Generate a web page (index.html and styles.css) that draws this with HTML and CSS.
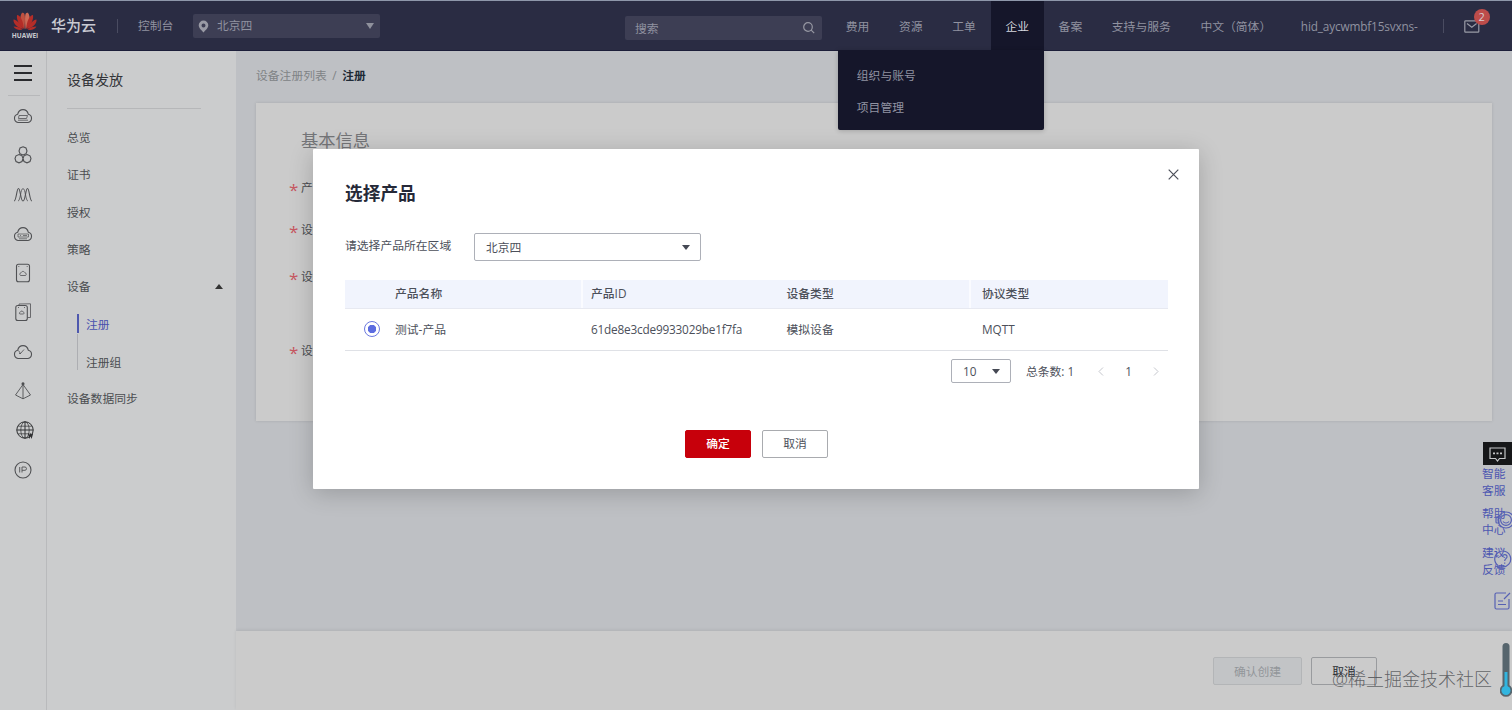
FILE: index.html
```html
<!DOCTYPE html>
<html lang="zh-CN">
<head>
<meta charset="utf-8">
<title>设备发放</title>
<link rel="stylesheet" href="styles.css">
</head>
<body>
<div class="app">
  <header class="topbar">
    <div class="logo">
      <svg width="26" height="18" viewBox="0 0 26 18">
        <g fill="#b42d28">
          <path d="M12.5 17C8 13 7 5 10 .8 13 0 13.500 3 12.500 17Z" fill="#c0503f"/>
          <path d="M13.500 17C18 13 19 5 16 .8 13 0 12.500 3 13.500 17Z" fill="#cf6a55"/>
          <path d="M11.800 17C8 14 4 8 5 3 8 3 11.500 9 11.800 17Z"/>
          <path d="M14.200 17C18 14 22 8 21 3 18 3 14.500 9 14.200 17Z"/>
          <path d="M11 17C6 16 1 12 1.500 7.500 5 8 9 12 11 17Z"/>
          <path d="M15 17C20 16 25 12 24.500 7.500 21 8 17 12 15 17Z"/>
          <path d="M10.500 17.600C7 18.500 3 17.500 1.500 14.500 5 14.500 8 15.500 10.500 17.600Z"/>
          <path d="M15.500 17.600C19 18.500 23 17.500 24.500 14.500 21 14.500 18 15.500 15.500 17.600Z"/>
        </g>
      </svg>
      <span class="logo-word">HUAWEI</span>
    </div>
    <span class="brand">华为云</span>
    <i class="bar-divider"></i>
    <span class="console">控制台</span>
    <div class="region">
      <svg width="11" height="13" viewBox="0 0 11 13"><path fill="#999aa5" fill-rule="evenodd" d="M5.500 .5a4.800 4.800 0 0 0-4.800 4.800c0 3 3 5 4.800 7.300 1.800-2.300 4.800-4.300 4.800-7.300A4.800 4.800 0 0 0 5.500 .5Zm0 2.900a2 2 0 1 1 0 4 2 2 0 0 1 0-4Z"/></svg>
      <span>北京四</span>
      <svg class="push" width="8" height="6" viewBox="0 0 8 6"><path d="M0 0h8L4 6Z" fill="#8f919c"/></svg>
    </div>
    <div class="search">
      <span>搜索</span>
      <svg class="push" width="12" height="12" viewBox="0 0 12 12" fill="none" stroke="#9697a2" stroke-width="1.200"><circle cx="5" cy="5" r="4.300"/><path d="M8.200 8.200l3 3"/></svg>
    </div>
    <nav class="nav">
      <span>费用</span><span>资源</span><span>工单</span>
      <span class="active">企业
        <div class="dropdown"><a>组织与账号</a><a>项目管理</a></div>
      </span>
      <span>备案</span><span>支持与服务</span><span>中文（简体）</span><span class="user">hid_aycwmbf15svxns-</span>
    </nav>
    <i class="bar-divider user-divider"></i>
    <div class="mail">
      <svg width="16" height="13" viewBox="0 0 16 13" fill="none" stroke="#999ba6" stroke-width="1.200"><rect x=".8" y=".8" width="14" height="11.400" rx=".8"/><path d="M3 3.500l4.800 3.700 4.800-3.700"/></svg>
      <b class="badge">2</b>
    </div>
  </header>

  <div class="body">
    <aside class="rail">
      <div class="burger"><i></i><i></i><i></i></div>
      <div class="rail-icons">
        <svg viewBox="0 0 20 20"><path d="M5 16.500a4.200 4.200 0 0 1-.4-8.200C5.500 5 7.500 3.600 10 3.600s4.500 1.400 5.400 4.700a4.200 4.200 0 0 1-.4 8.200Z"/><path d="M6 9.500h8.500l-1 3h-8ZM5 14.200h10" stroke-width=".8"/></svg>
        <svg viewBox="0 0 20 20"><path d="M10 1.800l3 1.200 1 3-1 2.800L10 10 7 8.800 6 6l1-3Z"/><path d="M6 9.500l3 1.300L10 13.500l-1 3-3 1.300-3-1.300-1-3 1-2.700ZM14 9.500l3 1.300 1 2.700-1 3-3 1.300-3-1.300-1-3 1-2.700Z"/></svg>
        <svg viewBox="0 0 20 20"><path d="M1 16C3.500 16 3.500 3.500 5.500 3.500S7.500 16 10 16 12.500 3.500 14.500 3.500s2 12.500 4.500 12.500"/><path d="M5 16C7.500 16 7.500 3.500 10 3.500s2.500 12.500 5 12.500" stroke-width=".8"/></svg>
        <svg viewBox="0 0 20 20"><path d="M5 16.500a4.200 4.200 0 0 1-.4-8.200C5.500 5 7.500 3.600 10 3.600s4.500 1.400 5.400 4.700a4.200 4.200 0 0 1-.4 8.200Z"/><path d="M5 10h10.500v3H5ZM6 14.800h8M7 11.500h1M10 11.500h4" stroke-width=".7"/></svg>
        <svg viewBox="0 0 20 20"><rect x="3.500" y="1.200" width="13" height="17.600" rx="2"/><path d="M7.500 12.500c-1.400-1.200-.4-2.600.5-2.600.7-2 3.300-2 4 0 1.300.2 1.800 1.500.6 2.600ZM5.300 3.500h1M13.700 3.500h1" stroke-width=".8"/></svg>
        <svg viewBox="0 0 20 20"><rect x="2.800" y="3.500" width="11.500" height="15" rx="2"/><path d="M6 3.300V2l11.500-.2v13.700h-3M6.800 12c-1-1 0-2 .6-2 .6-1.300 2.200-1.300 2.800 0 1 .3 1.100 1.300.4 2ZM5 5.500h1M11 5.500h1" stroke-width=".8"/></svg>
        <svg viewBox="0 0 20 20"><path d="M5 16.500a4.200 4.200 0 0 1-.4-8.200C5.500 5 7.500 3.600 10 3.600s4.500 1.400 5.400 4.700a4.200 4.200 0 0 1-.4 8.200Z"/><path d="M5.500 8.500l2 3 3.500-4M6 11.500h2" stroke-width=".8"/></svg>
        <svg viewBox="0 0 20 20"><path d="M10 3.500L2.500 14 10 17.800 17.500 14ZM10 3.500v14.300" stroke-width=".9"/><circle cx="10" cy="2.800" r="1" fill="#333"/></svg>
        <svg class="globe" viewBox="0 0 20 20"><g stroke-width="1"><circle cx="10" cy="10" r="8.200"/><ellipse cx="10" cy="10" rx="4.200" ry="8.200" stroke-width=".7"/><path d="M1.800 10h16.400M10 1.800v16.400"/><path d="M3 6.200h14M3 13.800h11" stroke-width=".7"/></g><path d="M13.500 13.500l1 3.500 1-2.500 1 2.500 1-3.500" stroke-width="1.300"/></svg>
        <svg viewBox="0 0 20 20"><circle cx="10" cy="10" r="8"/><path d="M6.700 7v5.500M9 12.500V7h3c2 0 2 3.300 0 3.300H9" stroke-width=".9"/></svg>
      </div>
    </aside>

    <aside class="sidebar">
      <h2>设备发放</h2>
      <ul class="menu">
        <li>总览</li><li>证书</li><li>授权</li><li>策略</li>
        <li class="open">设备<svg class="push" width="8" height="5" viewBox="0 0 8 5"><path d="M0 5h8L4 0Z" fill="#333"/></svg></li>
        <li class="sub current">注册</li>
        <li class="sub last">注册组</li>
        <li>设备数据同步</li>
      </ul>
    </aside>

    <main class="main">
      <div class="content">
        <div class="crumbs">设备注册列表<i>/</i><b>注册</b></div>
        <section class="card">
          <h3>基本信息</h3>
          <div class="field f1"><em>*</em>产品</div>
          <div class="field f2"><em>*</em>设备名称</div>
          <div class="field f3"><em>*</em>设备标识码</div>
          <div class="field f4"><em>*</em>设备认证</div>
        </section>
      </div>
      <footer class="footer">
        <span class="btn disabled">确认创建</span>
        <span class="btn ghost">取消</span>
      </footer>
    </main>
  </div>

  <div class="helper">
    <div class="chat"><svg width="17" height="15" viewBox="0 0 17 15" fill="none" stroke="#c5c7c9" stroke-width="1.200"><path d="M1 1h15v10.500h-5.500L8.500 14l-2-2.500H1Z"/><path d="M4 6.300h2M7.500 6.300h2M11 6.300h2" stroke-width="1.800"/></svg></div>
    <p>智能<br>客服</p><p>帮助<br>中心</p><p>建议<br>反馈</p>
    <svg class="headset" width="20" height="20" viewBox="0 0 20 20"><circle cx="11" cy="10" r="8"/><circle cx="11" cy="10" r="5.400"/><path d="M3.500 7.500H2a1 1 0 0 0-1 1V12a1 1 0 0 0 1 1h2ZM8 11.500c1.500 2 4.500 2 6 0"/></svg>
    <svg class="question" width="20" height="20" viewBox="0 0 20 20"><path d="M4 16.500A8 8 0 1 1 8 18l-4 .8Z"/><path d="M8.500 8c0-3.500 5-3 4.500 0-.2 1.700-2.300 1.800-2.300 4M10.700 13.500v1.200"/></svg>
    <svg class="note" width="18" height="18" viewBox="0 0 18 18"><path d="M12 1H2.500C1.500 1 1 1.500 1 2.500v13c0 1 .5 1.500 1.500 1.500h11c1 0 1.500-.5 1.500-1.500V7M10 7l6-6M4 9h5M4 12.500h8"/></svg>
  </div>

  <div class="overlay">
    <div class="modal">
      <svg class="close" width="11" height="11" viewBox="0 0 11 11"><path d="M.7 .7l9.600 9.600M10.300 .7L.7 10.300" stroke="#4b4e58" stroke-width="1.200"/></svg>
      <h1>选择产品</h1>
      <div class="picker">
        <label>请选择产品所在区域</label>
        <div class="select">北京四<svg class="push" width="8" height="5" viewBox="0 0 8 5"><path d="M0 0h8L4 5Z" fill="#454954"/></svg></div>
      </div>
      <div class="table">
        <div class="row head"><span></span><span>产品名称</span><span class="split">产品ID</span><span>设备类型</span><span class="split">协议类型</span></div>
        <div class="row data"><span><i class="radio"></i></span><span>测试-产品</span><span class="code">61de8e3cde9933029be1f7fa</span><span>模拟设备</span><span>MQTT</span></div>
      </div>
      <div class="pager">
        <div class="size">10<svg class="push" width="8" height="5" viewBox="0 0 8 5"><path d="M0 0h8L4 5Z" fill="#454954"/></svg></div>
        <span class="total">总条数: 1</span>
        <svg class="prev" width="6" height="9" viewBox="0 0 6 9"><path d="M5 .5L1 4.500l4 4"/></svg>
        <span>1</span>
        <svg class="next" width="6" height="9" viewBox="0 0 6 9"><path d="M1 .5l4 4-4 4"/></svg>
      </div>
      <div class="actions"><span class="btn primary">确定</span><span class="btn cancel">取消</span></div>
    </div>
  </div>

  <div class="watermark">@稀土掘金技术社区</div>
  <svg class="thermo" width="12" height="56" viewBox="0 0 12 56"><rect x="2.500" y="1" width="7" height="47" rx="3.500" fill="#56656d"/><circle cx="6" cy="48.500" r="6.300" fill="#56656d"/><path d="M4.500 30h3v15h-3Z" fill="#31b5df"/><circle cx="6" cy="48.500" r="4.500" fill="#31b5df"/></svg>
</div>
</body>
</html>
```

FILE: styles.css
```css
* { box-sizing: border-box; }
body {
  margin: 0;
  font-family: "Open Sans", "Noto Sans CJK SC", sans-serif;
  font-size: 11.8px;
  line-height: 18px;
  color: #4a4c50;
}
h1, h2, h3, p, ul { margin: 0; padding: 0; }
li { list-style: none; }
i, em { font-style: normal; }
svg { display: block; flex: none; }
.push { margin-left: auto; }

.app {
  position: relative;
  width: 1512px;
  height: 710px;
  overflow: hidden;
  display: flex;
  flex-direction: column;
}

/* Top bar */
.topbar {
  height: 51px;
  flex: none;
  display: flex;
  align-items: center;
  background: #2a2c43;
  border-top: 1px solid #8e97aa;
  border-bottom: 1px solid #1c1e39;
  color: #9092a0;
  white-space: nowrap;
}
.logo { width: 26px; margin-left: 12px; display: flex; flex-direction: column; align-items: center; }
.logo-word { font: bold 6.5px/8px "Open Sans", sans-serif; color: #c8cad0; margin-top: 2px; }
.brand { width: 45px; margin: -2px 0 0 13px; font-size: 15px; font-weight: 500; color: #c9cad2; }
.bar-divider { width: 1px; height: 14px; background: #4a4c61; margin-left: 21px; }
.console { margin: -2px 0 0 20px; width: 36px; }
.region {
  width: 187px; height: 24px; margin: 1px 0 0 19px; padding: 0 6px 0 5px;
  display: flex; align-items: center; gap: 8px;
  background: #3d3e54; border-radius: 2px;
}
.region span { margin-top: -2px; }
.search {
  width: 197px; height: 24px; margin: 4px 9px 0 245px; padding: 0 7px 0 10px;
  display: flex; align-items: center;
  background: #3d3e54; border-radius: 2px;
}
.nav { display: flex; align-self: stretch; }
.nav > span { padding: 0 14.8px; line-height: 51px; height: 49px; }
.nav .user { letter-spacing: -.15px; }
.nav .active { position: relative; background: #15162a; color: #d6d7df; }
.dropdown {
  position: absolute; right: 0; top: 49px; z-index: 2;
  width: 206px; height: 80px; padding: 9px 19px 0;
  background: #15162a; color: #9193a2; border-radius: 0 0 2px 2px;
  box-shadow: 0 1px 5px rgba(0, 0, 0, .2);
}
.dropdown a { display: block; line-height: 32px; }
.user-divider { margin-left: 10px; }
.mail { position: relative; margin: 1px 0 0 20px; }
.badge {
  position: absolute; left: 10px; top: -11px;
  width: 16px; height: 16px; border-radius: 8px;
  background: #bd4c4a; color: #d8d0d4;
  font-size: 11px; font-weight: 400; line-height: 16px; text-align: center;
}

/* Left columns */
.body { flex: 1; min-height: 0; display: flex; }
.rail { width: 47px; background: #cbcccd; border-right: 1px solid #b9babc; }
.burger {
  margin-left: 8px; width: 32px; height: 45px; padding: 14px 0 0 6px;
  border-bottom: 1px solid #b7b8ba;
  display: flex; flex-direction: column; gap: 5px;
}
.burger i { width: 18px; height: 2px; background: #292a2d; }
.rail-icons { padding: 0 0 0 12.5px; }
.rail-icons svg { width: 20px; height: 20px; margin: 10px 0 19.300px; fill: none; stroke: #505154; stroke-width: 1.100; }
.rail-icons svg + svg { margin-top: 0; }
.rail-icons .globe { position: relative; left: 2px; stroke: #2f3032; }
.sidebar { width: 189px; background: #cbcccd; padding: 19px 0 0 20px; }
.sidebar h2 {
  width: 134px; height: 39px; border-bottom: 1px solid #b6b7b9;
  font-size: 14px; font-weight: 400; line-height: 20px; color: #333539;
}
.menu { padding-top: 10px; }
.menu li { height: 37.300px; line-height: 37px; }
.menu .open { display: flex; align-items: center; padding-right: 13px; }
.menu .sub { margin-left: 10px; padding-left: 9px; position: relative; line-height: 38px; }
.menu .sub::before { content: ""; position: absolute; left: 0; top: 9px; width: 2px; height: 19px; background: #4e58ae; }
.menu .last::before { width: 1px; top: -9px; height: 36px; background: #adaeb2; }
.menu .current { color: #4850ad; }

/* Main area */
.main { flex: 1; display: flex; flex-direction: column; background: #bec0c4; }
.content { flex: 1; padding: 14px 20px 0; }
.crumbs { display: flex; height: 38px; line-height: 20px; color: #808386; }
.crumbs i { margin: 0 5.500px; }
.crumbs b { color: #202a36; }
.card {
  height: 318px; background: #cbcbcb; padding: 25px 0 0 33px;
  box-shadow: 0 0 3px rgba(0, 0, 0, .12);
}
.card h3 { padding-left: 12px; font-size: 17.300px; line-height: 25px; font-weight: 400; color: #747578; }
.field { display: flex; gap: 4px; height: 18px; }
.field em { width: 8px; font-size: 17px; line-height: 23px; color: #c75761; }
.f1 { margin-top: 25px; }
.f2 { margin-top: 24px; }
.f3 { margin-top: 29px; }
.f4 { margin-top: 56px; }
.footer {
  height: 79px; background: #cbcbcb; padding: 26px 135px 0 0;
  display: flex; justify-content: flex-end; gap: 9px;
  box-shadow: 0 -1px 3px rgba(0, 0, 0, .08);
}
.btn { display: flex; align-items: center; justify-content: center; height: 28px; width: 66px; border-radius: 2px; border: 1px solid #a9abaf; }
.disabled { width: 89px; background: #c2c4c6; border-color: #b3b5b7; color: #92969a; }
.ghost { border-color: #999b9e; color: #292c32; }

/* Floating helper strip */
.helper { position: absolute; left: 1483px; top: 442px; width: 29px; color: #4d57b1; }
.helper p { position: relative; left: -1px; line-height: 16.500px; height: 33px; margin-bottom: 6.500px; white-space: nowrap; }
.chat { height: 23px; background: #161719; padding: 5px 0 0 6px; }
.helper > svg { position: absolute; fill: none; stroke: #5660b4; stroke-width: 1.200; }
.headset { left: 12px; top: 68px; }
.question { left: 11px; top: 107px; }
.note { left: 11px; top: 150px; }

/* Product dialog */
.overlay { position: absolute; inset: 0; padding-top: 149px; display: flex; justify-content: center; align-items: flex-start; }
.modal {
  position: relative; width: 886px; height: 340px; padding: 31px 31px 0 32px;
  background: #fff; border-radius: 1px; color: #4c505a;
  box-shadow: 0 4px 24px rgba(0, 0, 0, .2);
}
.close { position: absolute; right: 20px; top: 20px; }
.modal h1 { font-size: 17.700px; line-height: 27px; color: #252938; }
.picker { display: flex; margin-top: 26px; }
.picker label { width: 129px; line-height: 25px; }
.select {
  width: 227px; height: 28px; padding: 0 10px 0 11px;
  display: flex; align-items: center;
  border: 1px solid #adb0b8; border-radius: 2px;
}
.table { margin-top: 19px; }
.row { display: grid; grid-template-columns: 50px 186px 195.500px 195.500px 1fr; align-items: center; }
.row > span { margin-top: -2px; }
.row > span:nth-child(n+3) { padding-left: 10px; }
.head { height: 29px; background: #f1f4fd; border-bottom: 1px solid #e7e9f1; font-weight: 500; }
.head .split { position: relative; }
.head .split::before { content: ""; position: absolute; left: 0; top: -4px; width: 2px; height: 28px; background: #fafbff; }
.head .split:last-child::before { left: -3px; }
.data { height: 42px; border-bottom: 1px solid #dfe1e6; }
.code { letter-spacing: -.2px; }
.radio {
  display: block; width: 16px; height: 16px; margin-left: 19px;
  border: 1px solid #6c79df; border-radius: 50%;
  background: radial-gradient(circle, #5c6ce0 0 4px, #fff 4.500px);
}
.pager { display: flex; align-items: center; justify-content: flex-end; height: 24px; margin-top: 8px; padding-right: 9px; }
.pager > svg { fill: none; stroke: #c4c6cc; stroke-width: 1; }
.size { width: 60px; height: 24px; display: flex; align-items: center; padding: 0 10px 0 11px; border: 1px solid #adb0b8; border-radius: 2px; }
.total { margin: 0 24px 0 15px; }
.prev { margin-right: 21px; }
.next { margin-left: 21px; }
.actions { display: flex; gap: 11px; margin: 47px 0 0 340px; }
.actions .btn { padding-bottom: 2px; }
.primary { background: #c7000b; border-color: #c7000b; color: #fff; font-weight: 500; }

.watermark { position: absolute; right: 20px; top: 667px; font-size: 18px; line-height: 24px; color: rgba(70, 72, 76, .8); white-space: nowrap; font-weight: 300; }
.thermo { position: absolute; right: 0; top: 642px; }
```
